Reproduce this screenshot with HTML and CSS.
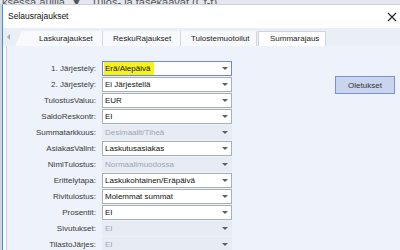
FILE: index.html
```html
<!DOCTYPE html>
<html lang="fi">
<head>
  <meta charset="UTF-8" />
  <title>Selausrajaukset</title>
  <link rel="stylesheet" href="styles.css">
</head>
<body>

  <div class="backdrop">ksessa auilla &nbsp;▼ &nbsp; Tulos- ja tasekaavat (Ct-f)</div>

  <div class="window">
    <div class="titlebar">
      <span class="title">Selausrajaukset</span>
      <svg class="close" width="10" height="10" viewBox="0 0 10 10">
        <path d="M1 1 L9 9 M9 1 L1 9" stroke="#222" stroke-width="1.1" fill="none"/>
      </svg>
    </div>

    <div class="tabstrip">
      <span class="scroll-left"></span>
      <div class="tab tab-first">Laskurajaukset</div>
      <div class="tab tab-second">ReskuRajaukset</div>
      <div class="tab tab-third">Tulostemuotoilut</div>
      <div class="tab tab-active">Summarajaus</div>
    </div>

    <div class="panel">
      <div class="form">
        <label>1. Järjestely:</label>
        <div class="combo focus"><span class="mark">Erä/Alepäivä</span><i class="arrow"></i></div>

        <label>2. Järjestely:</label>
        <div class="combo">Ei Järjestellä<i class="arrow"></i></div>

        <label>TulostusValuu:</label>
        <div class="combo">EUR<i class="arrow"></i></div>

        <label>SaldoReskontr:</label>
        <div class="combo">EI<i class="arrow"></i></div>

        <label>Summatarkkuus:</label>
        <div class="combo off">Desimaalit/Tiheä<i class="arrow"></i></div>

        <label>AsiakasValint:</label>
        <div class="combo">Laskutusasiakas<i class="arrow"></i></div>

        <label>NimiTulostus:</label>
        <div class="combo off">Normaalimuodossa<i class="arrow"></i></div>

        <label>Erittelytapa:</label>
        <div class="combo">Laskukohtainen/Eräpäivä<i class="arrow"></i></div>

        <label>Rivitulostus:</label>
        <div class="combo">Molemmat summat<i class="arrow"></i></div>

        <label>Prosentit:</label>
        <div class="combo">EI<i class="arrow"></i></div>

        <label>Sivutukset:</label>
        <div class="combo off">EI<i class="arrow"></i></div>

        <label>TilastoJärjes:</label>
        <div class="combo off">EI<i class="arrow"></i></div>
      </div>

      <div class="side">
        <button class="btn">Oletukset</button>
      </div>
    </div>
  </div>

</body>
</html>
```

FILE: styles.css
```css
body {
  margin: 0;
  width: 400px;
  height: 250px;
  overflow: hidden;
  background: #cfd5de;
  font-family: 'Liberation Sans', Arial, sans-serif;
  font-size: 8px;
  color: #333;
}

.backdrop {
  height: 4px;
  overflow: hidden;
  font-size: 11px;
  line-height: 4px;
  padding-left: 2px;
  color: #555;
  white-space: nowrap;
  background: #e4e8ee;
}

.window {
  margin-left: 2px;
  height: 246px;
  background: #fff;
  border-left: 1px solid #3f8fe6;
  border-top: 1px solid #c9d3e2;
}

.titlebar {
  height: 23px;
  display: flex;
  align-items: center;
  justify-content: space-between;
  padding: 0 3px 1px 5px;
  box-sizing: border-box;
}

.title {
  font-size: 8.5px;
  color: #111;
}

.close {
  margin-top: 1px;
}

.tabstrip {
  height: 18px;
  display: flex;
  align-items: flex-end;
  background: #eaeef5;
  padding-left: 4px;
}

.scroll-left {
  width: 0;
  height: 0;
  border-top: 3px solid transparent;
  border-bottom: 3px solid transparent;
  border-right: 3px solid #a3a9b3;
  align-self: center;
  margin-right: 5px;
}

.tab {
  box-sizing: border-box;
  height: 15px;
  line-height: 15px;
  padding-left: 10px;
  color: #222;
  border-right: 1px solid #d3d8e0;
  background: #f7f9fc;
  white-space: nowrap;
  overflow: hidden;
}

.tab-first {
  width: 88px;
  padding-left: 24px;
  clip-path: polygon(7px 0, 100% 0, 100% 100%, 0 100%);
}

.tab-second {
  width: 78px;
}

.tab-third {
  width: 76px;
  padding-left: 10px;
}

.tab-active {
  width: 68px;
  background: #fff;
  border: 1px solid #cfd5de;
  border-bottom: none;
  margin-left: 1px;
  padding-left: 11px;
  line-height: 14px;
}

.panel {
  height: 204px;
  margin-left: 3px;
  border-left: 1px solid #c8ced8;
  background: #eef2fa;
  display: flex;
  padding-top: 15px;
  box-sizing: border-box;
}

.form {
  display: grid;
  grid-template-columns: 89px 130px;
  grid-auto-rows: 15px;
  column-gap: 6px;
  row-gap: 1px;
}

.form label {
  text-align: right;
  line-height: 15px;
  color: #3a3a3a;
}

.combo {
  position: relative;
  box-sizing: border-box;
  height: 15px;
  line-height: 13px;
  padding-left: 2px;
  background: #fff;
  border: 1px solid #a9afb9;
  color: #111;
  white-space: nowrap;
}

.combo.focus {
  border-color: #6e8ad0;
  padding-left: 1px;
}

.combo.off {
  background: #e6ebf4;
  border-color: #e6ebf4;
  color: #a0a6b0;
}

.mark {
  display: inline-block;
  background: #f7f21c;
  padding: 0 4px 0 1px;
  height: 13px;
}

.arrow {
  position: absolute;
  right: 3px;
  top: 5px;
  width: 0;
  height: 0;
  border-left: 3px solid transparent;
  border-right: 3px solid transparent;
  border-top: 3px solid #5c5f66;
}

.side {
  padding: 15px 0 0 103px;
}

.btn {
  width: 60px;
  height: 18px;
  padding: 0;
  font-family: inherit;
  font-size: 8px;
  color: #333;
  background: #c9d4ee;
  border: 1px solid #7c92c9;
}
```
